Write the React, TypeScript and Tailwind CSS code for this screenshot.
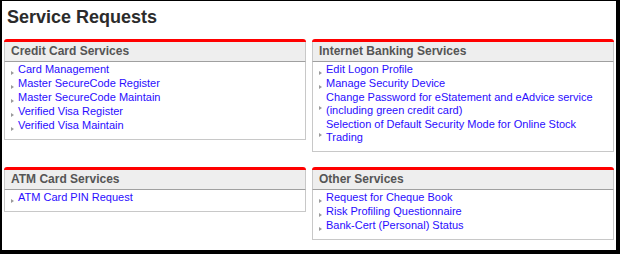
import React from 'react';

type Item = { label: string };
type Panel = { title: string; items: Item[] };

const PANELS: Panel[][] = [
  [
    {
      title: 'Credit Card Services',
      items: [
        { label: 'Card Management' },
        { label: 'Master SecureCode Register' },
        { label: 'Master SecureCode Maintain' },
        { label: 'Verified Visa Register' },
        { label: 'Verified Visa Maintain' },
      ],
    },
    {
      title: 'Internet Banking Services',
      items: [
        { label: 'Edit Logon Profile' },
        { label: 'Manage Security Device' },
        { label: 'Change Password for eStatement and eAdvice service (including green credit card)' },
        { label: 'Selection of Default Security Mode for Online Stock Trading' },
      ],
    },
  ],
  [
    {
      title: 'ATM Card Services',
      items: [{ label: 'ATM Card PIN Request' }],
    },
    {
      title: 'Other Services',
      items: [
        { label: 'Request for Cheque Book' },
        { label: 'Risk Profiling Questionnaire' },
        { label: 'Bank-Cert (Personal) Status' },
      ],
    },
  ],
];

const ServicePanel: React.FC<{ panel: Panel }> = ({ panel }) => (
  <div className="w-[302px]">
    {/* red top strip */}
    <div className="h-[3px] bg-[#ff0000] rounded-t-[3px]"></div>
    <div className="h-[20px] bg-[#eeeeee] border-x border-b border-x-[#c8c8c8] border-b-[#a0a0a0] pl-[6px] text-[12px] leading-[19px] font-bold text-[#555555]">
      {panel.title}
    </div>
    <div className="border-x border-b border-[#c8c8c8] bg-white pb-[7px]">
      {panel.items.map((item) => (
        <div key={item.label} className="flex items-center pt-px">
          <div className="w-[13px] shrink-0 flex justify-end pr-[4px]">
            <span className="mt-[7px] w-0 h-0 border-l-[3px] border-l-[#9a9a9a] border-y-[2.5px] border-y-transparent"></span>
          </div>
          <a href="#" className="text-[11px] leading-[13px] text-[#2a0cff] pr-[20px]">
            {item.label}
          </a>
        </div>
      ))}
    </div>
  </div>
);

export default function App() {
  return (
    <div
      className="w-[620px] h-[254px] bg-white border-l-2 border-t border-r-4 border-b-4 border-black overflow-hidden"
      style={{ fontFamily: '"Liberation Sans", Arial, sans-serif' }}
    >
      <div className="px-[2px]">
        <h1 className="mt-[5px] pl-[3px] text-[18px] leading-[22px] font-bold text-[#2b2b2b]">Service Requests</h1>
        <div className="mt-[11px] flex flex-col gap-[15px]">
          {PANELS.map((row, i) => (
            <div key={i} className="flex items-start gap-[6px]">
              {row.map((p) => (
                <ServicePanel key={p.title} panel={p} />
              ))}
            </div>
          ))}
        </div>
      </div>
    </div>
  );
}
